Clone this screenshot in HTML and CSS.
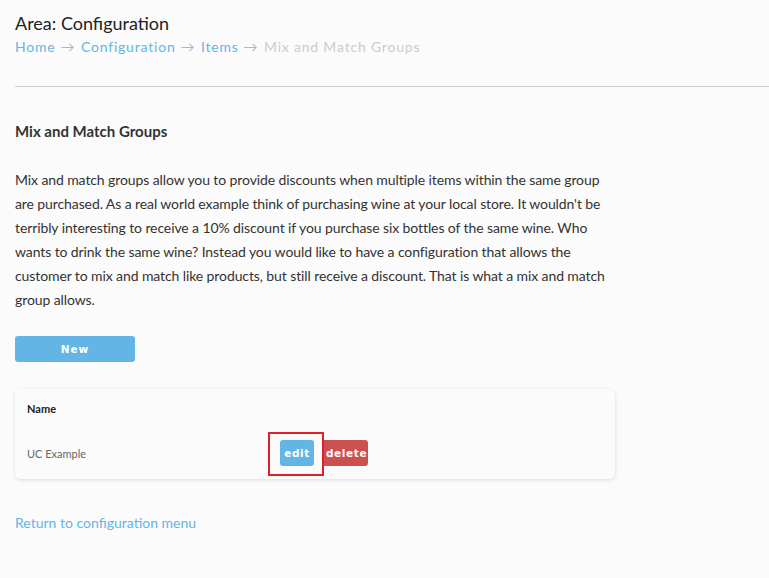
FILE: index.html
```html
<!DOCTYPE html>
<html lang="en">
<head>
  <meta charset="utf-8" />
  <title>Mix and Match Groups</title>
  <link rel="stylesheet" href="styles.css">
</head>
<body>
<header class="top">
  <h1 class="area">Area: Configuration</h1>
  <nav class="crumbs">
    <a href="#">Home</a><span class="arr">→</span>
    <a href="#">Configuration</a><span class="arr">→</span>
    <a href="#">Items</a><span class="arr">→</span>
    <span class="here">Mix and Match Groups</span>
  </nav>
</header>
<hr class="rule">

<main class="content">
  <h2 class="title">Mix and Match Groups</h2>
  <p class="intro">Mix and match groups allow you to provide discounts when multiple items within the same group are purchased. As a real world example think of purchasing wine at your local store. It wouldn't be terribly interesting to receive a 10% discount if you purchase six bottles of the same wine. Who wants to drink the same wine? Instead you would like to have a configuration that allows the customer to mix and match like products, but still receive a discount. That is what a mix and match group allows.</p>

  <button class="btn btn-new">New</button>

  <div class="card">
    <div class="row head">
      <div class="cell">Name</div>
      <div class="cell"></div>
    </div>
    <div class="row">
      <div class="cell name">UC Example</div>
      <div class="cell actions">
        <span class="mark"><button class="btn btn-sm btn-edit">edit</button></span>
        <button class="btn btn-sm btn-del">delete</button>
      </div>
    </div>
  </div>

  <a class="back" href="#">Return to configuration menu</a>
</main>
</body>
</html>
```

FILE: styles.css
```css
html,body{margin:0;background:#fbfbfb;font-family:Lato,"Open Sans",sans-serif;color:#333}
a{color:#63b5e5;text-decoration:none}

.top{padding:12px 15px 0}
.area{margin:0;font-size:18px;font-weight:400;color:#222;line-height:22px}
.crumbs{margin-top:3px;font-size:14px;line-height:20px;letter-spacing:.8px}
.crumbs .arr{color:#b5b5b5;margin:0 2px 0 5px;letter-spacing:0}
.crumbs .here{color:#ccc}
.rule{margin:29px 0 0 15px;border:0;border-top:1px solid #ccc}

.content{padding:0 15px;width:600px}
.title{margin:34px 0 0;font-size:15px;font-weight:700;color:#333;line-height:20px}
.intro{margin:27px 0 0;font-size:14px;line-height:24px;color:#333;letter-spacing:-.1px}

.btn{border:0;border-radius:3px;color:#fff;font-family:"DejaVu Sans",sans-serif;font-weight:700;
     font-size:10.5px;letter-spacing:1px;cursor:pointer}
.btn-new{display:block;margin-top:24px;width:120px;height:26px;background:#63b5e5}
.btn-sm{height:26px;padding:0 4px;letter-spacing:.6px}
.btn-edit{background:#63b5e5;width:34px}
.btn-del{background:#cb5050;width:46px}

.card{margin-top:27px;border-radius:6px;background:#fbfbfb;box-shadow:0 1px 4px rgba(0,0,0,.13);
      padding:5px 0 13px}
.row{display:grid;grid-template-columns:253px 1fr;align-items:center}
.row.head{height:28px;font-size:11px;font-weight:700;color:#222}
.row .cell{padding-left:12px}
.row.head .cell{padding-top:1px}
.name{font-size:11px;color:#666;padding-top:18px}
.actions{display:flex;align-items:center;gap:8px;padding-top:18px}
.mark{position:relative;display:inline-flex}
.mark::after{content:"";position:absolute;left:-12px;top:-8px;right:-10px;bottom:-10px;
             border:2px solid #e0202a}

.back{display:inline-block;margin-top:34px;font-size:14px;line-height:20px}
```
